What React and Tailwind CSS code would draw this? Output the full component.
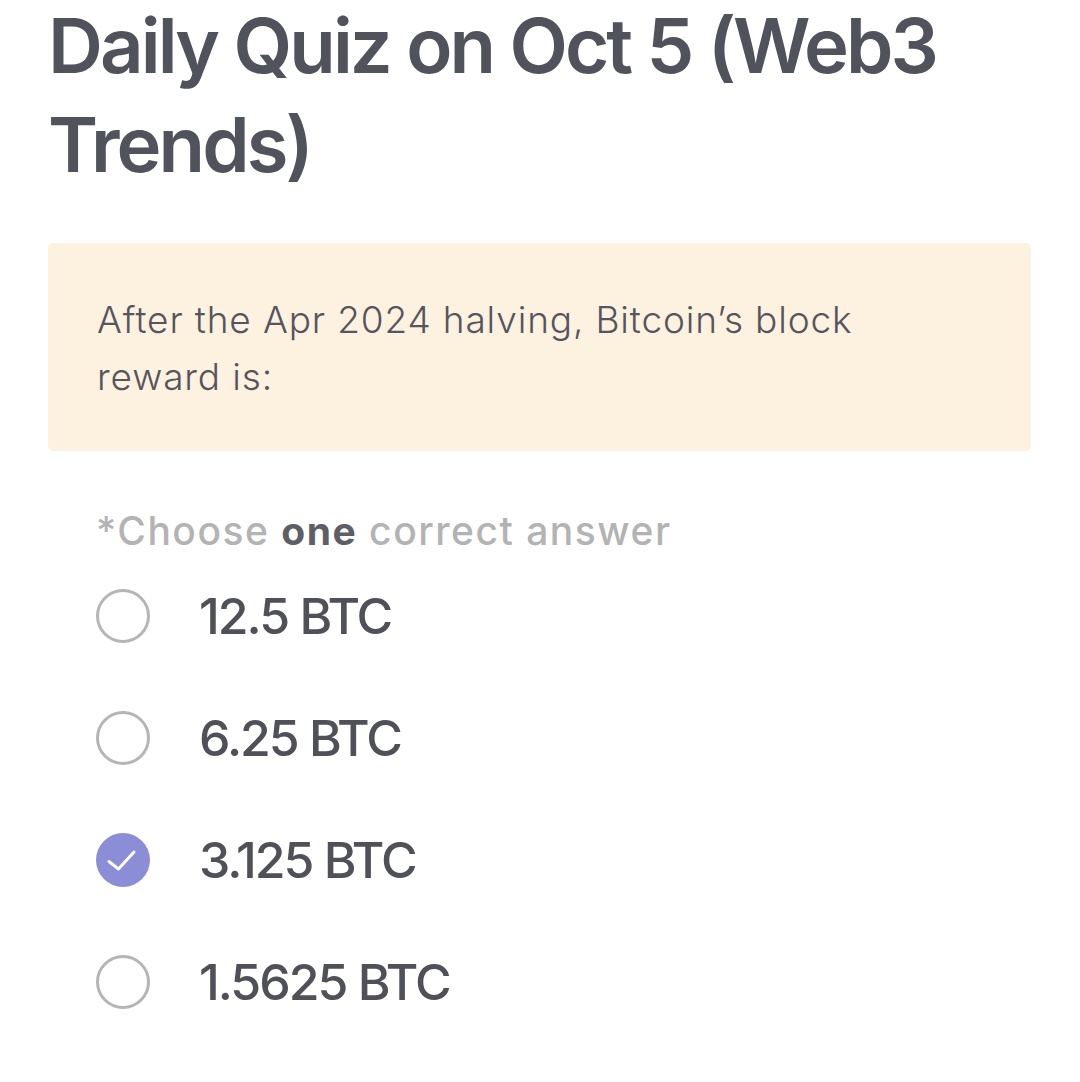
import React from "react";

const options = [
  { label: "12.5 BTC", checked: false },
  { label: "6.25 BTC", checked: false },
  { label: "3.125 BTC", checked: true },
  { label: "1.5625 BTC", checked: false },
];

export default function App() {
  return (
    <div
      className="w-[1080px] h-[1082px] bg-white overflow-hidden pl-[48px] pr-[49px]"
      style={{ fontFamily: "Inter, 'Noto Sans', sans-serif" }}
    >
      <h1 className="-mt-[4px] text-[76px] leading-[99px] font-semibold text-[#50525c] tracking-[-2.9px]">
        Daily Quiz on Oct 5 (Web3 Trends)
      </h1>
      <div className="mt-[49px] h-[208px] rounded-[5px] bg-[#fdf2e0] pl-[49px] pt-[48px] pr-[40px]">
        <p className="text-[37px] leading-[57px] font-light text-[#55555f] tracking-[0.85px] max-w-[800px]">
          After the Apr 2024 halving, Bitcoin’s block reward is:
        </p>
      </div>
      <p className="mt-[56px] pl-[48px] text-[39px] leading-[48px] font-medium text-[#b3b3b3] tracking-[1.5px]">
        *Choose <span className="font-bold text-[#5d5e66]">one</span> correct answer
      </p>
      <div className="pl-[48px] flex flex-col">
        {options.map((o) => (
          <div key={o.label} className="h-[122px] flex items-center gap-[49px]">
            {o.checked ? (
              <svg width="54" height="54" viewBox="0 0 54 54" className="shrink-0">
                <circle cx="27" cy="27" r="27" fill="#8b8ed6" />
                <path d="M13 28.5l9.5 7.5L38 19" fill="none" stroke="white" strokeWidth="3" strokeLinecap="round" strokeLinejoin="round" />
              </svg>
            ) : (
              <div className="w-[54px] h-[54px] shrink-0 rounded-full border-[3px] border-[#b5b5b5]" />
            )}
            <span className="text-[50px] font-medium text-[#4f5058] tracking-[-2px]">{o.label}</span>
          </div>
        ))}
      </div>
    </div>
  );
}
